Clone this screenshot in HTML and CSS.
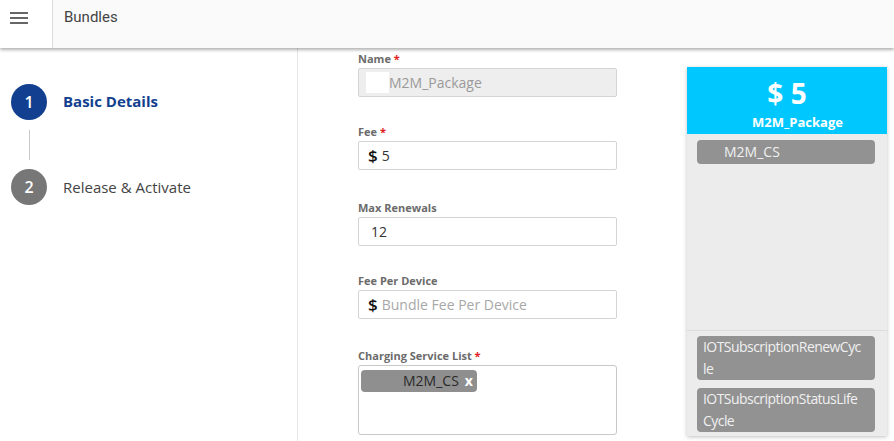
FILE: index.html
```html
<!DOCTYPE html>
<html>
<head>
<meta charset="utf-8">
<link rel="stylesheet" href="styles.css">
</head>
<body>
<header class="topbar">
  <div class="menu-cell">
    <svg class="menu-icon" width="18" height="12" viewBox="0 0 18 12"><rect x="0" y="0" width="18" height="2" fill="#666"/><rect x="0" y="5" width="18" height="2" fill="#666"/><rect x="0" y="10" width="18" height="2" fill="#666"/></svg>
  </div>
  <div class="title">Bundles</div>
</header>
<div class="main">
  <aside class="steps">
    <div class="step active"><span class="circle">1</span><span class="step-label">Basic Details</span></div>
    <div class="connector"></div>
    <div class="step"><span class="circle grey">2</span><span class="step-label">Release &amp; Activate</span></div>
  </aside>
  <section class="form">
    <div class="field">
      <div class="label">Name <span class="req">*</span></div>
      <div class="input disabled"><span class="mask"></span><span class="muted">M2M_Package</span></div>
    </div>
    <div class="field f2">
      <div class="label">Fee <span class="req">*</span></div>
      <div class="input"><span class="dollar">$</span><span class="val">5</span></div>
    </div>
    <div class="field f3">
      <div class="label">Max Renewals</div>
      <div class="input"><span class="val">12</span></div>
    </div>
    <div class="field f4">
      <div class="label">Fee Per Device</div>
      <div class="input"><span class="dollar">$</span><span class="placeholder">Bundle Fee Per Device</span></div>
    </div>
    <div class="field f5">
      <div class="label">Charging Service List <span class="req">*</span></div>
      <div class="textarea"><span class="tag"><span class="tag-text">M2M_CS</span><span class="tag-x">x</span></span></div>
    </div>
  </section>
  <section class="card">
    <div class="card-head">
      <div class="price">$ 5</div>
      <div class="pkg">M2M_Package</div>
    </div>
    <div class="card-body">
      <div class="card-top">
        <div class="chip chip-cs">M2M_CS</div>
      </div>
      <div class="card-bottom">
        <div class="chip chip-wrap">IOTSubscriptionRenewCycle</div>
        <div class="chip chip-wrap">IOTSubscriptionStatusLifeCycle</div>
      </div>
    </div>
  </section>
</div>
</body>
</html>
```

FILE: styles.css
```css
* { box-sizing: border-box; }
html, body { margin: 0; padding: 0; }
body {
  width: 894px;
  height: 441px;
  overflow: hidden;
  background: #fff;
  font-family: "Open Sans", "Noto Sans", sans-serif;
  color: #333;
}
.topbar {
  position: relative;
  z-index: 2;
  display: flex;
  height: 48px;
  background: #fafafa;
  box-shadow: 0 2px 3px rgba(0,0,0,0.3);
}
.menu-cell {
  width: 53px;
  background: #fff;
  border-right: 1px solid #ddd;
  display: flex;
  align-items: flex-start;
  padding: 12px 0 0 10px;
}
.title {
  padding: 8px 0 0 11px;
  font-family: Roboto, sans-serif;
  font-size: 15px;
  color: #444;
}
.main {
  display: flex;
  height: 393px;
}
.steps {
  width: 298px;
  border-right: 1px solid #e6e6e6;
  padding: 36px 0 0 11px;
}
.step {
  display: flex;
  align-items: center;
  height: 36px;
}
.circle {
  width: 36px;
  height: 36px;
  border-radius: 50%;
  background: #123f8f;
  color: #fff;
  font-size: 16px;
  font-weight: 600;
  display: flex;
  align-items: center;
  justify-content: center;
}
.circle.grey { background: #777; }
.step-label {
  margin-left: 16px;
  font-size: 15px;
  color: #444;
}
.step.active .step-label {
  color: #123f8f;
  font-weight: 700;
  margin-top: -2px;
}
.connector {
  width: 1px;
  height: 30px;
  background: #c8c8c8;
  margin: 10px 0 9px 18px;
}
.form {
  width: 259px;
  margin-left: 60px;
  padding-top: 3px;
}
.field.f2 { margin-top: 27px; }
.field.f3 { margin-top: 30px; }
.field.f4 { margin-top: 27px; }
.field.f5 { margin-top: 29px; }
.label {
  font-size: 11px;
  line-height: 15px;
  font-weight: 700;
  color: #6b6b6b;
  margin-bottom: 2px;
}
.req { color: #e02020; }
.input {
  height: 29px;
  border: 1px solid #d4d4d4;
  border-radius: 2px;
  display: flex;
  align-items: center;
  padding-left: 9px;
  font-size: 14px;
  background: #fff;
}
.input.disabled { background: #eeeeee; padding-left: 7px; }
.mask { width: 23px; height: 21px; background: #fff; }
.muted { color: #9a9a9a; }
.dollar {
  font-size: 17px;
  font-weight: 600;
  color: #111;
  margin-right: 4px;
}
.val { color: #333; }
.input .val:first-child { margin-left: 3px; }
.placeholder { color: #a8a8a8; }
.textarea {
  height: 70px;
  border: 1px solid #c8c8c8;
  border-radius: 3px;
  padding: 3px 2px;
}
.tag {
  display: inline-flex;
  align-items: center;
  width: 116px;
  height: 22px;
  background: #8f8f8f;
  border-radius: 4px;
  padding-left: 42px;
  font-size: 14px;
}
.tag-text { color: #2a2a2a; }
.tag-x { color: #fff; font-weight: 700; margin-left: 6px; }
.card {
  width: 200px;
  margin: 19px 0 0 70px;
  height: 369px;
  display: flex;
  flex-direction: column;
  background: #ececec;
  box-shadow: 0 1px 4px rgba(0,0,0,0.25);
}
.card-head {
  height: 67px;
  background: #00c8ff;
  color: #fff;
  text-align: center;
  font-weight: 700;
}
.price {
  font-size: 28px;
  line-height: 34px;
  padding-top: 9px;
}
.pkg {
  font-size: 13px;
  line-height: 18px;
  margin-top: 3px;
  padding-left: 21px;
}
.card-body {
  flex: 1;
  display: flex;
  flex-direction: column;
}
.card-top { flex: 1; padding: 6px 12px 0 10px; }
.chip {
  background: #929292;
  border-radius: 4px;
  color: #f0f0f0;
  font-size: 14px;
}
.chip-cs {
  height: 24px;
  line-height: 24px;
  padding-left: 27px;
}
.card-bottom {
  border-top: 1px solid #dcdcdc;
  padding: 5px 12px 4px 10px;
  display: flex;
  flex-direction: column;
  gap: 8px;
}
.chip-wrap {
  line-height: 22px;
  padding: 0 12px 0 6px;
  letter-spacing: -0.55px;
  word-break: break-all;
}
```
